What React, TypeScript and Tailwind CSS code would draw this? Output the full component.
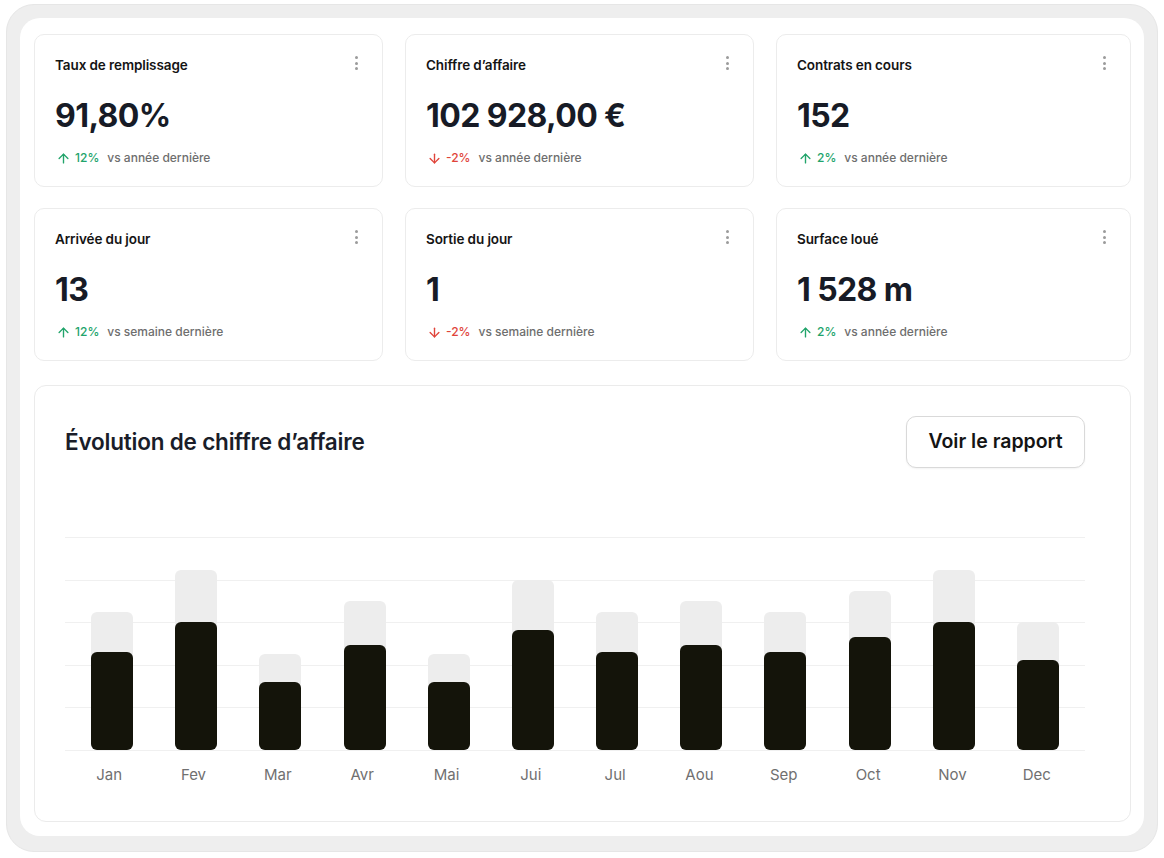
import { ArrowUp, ArrowDown } from 'lucide-react';

type Stat = {
  title: string;
  value: string;
  delta: string;
  up: boolean;
  period: string;
};

const stats: Stat[] = [
  { title: 'Taux de remplissage', value: '91,80%', delta: '12%', up: true, period: 'vs année dernière' },
  { title: 'Chiffre d’affaire', value: '102 928,00 €', delta: '-2%', up: false, period: 'vs année dernière' },
  { title: 'Contrats en cours', value: '152', delta: '2%', up: true, period: 'vs année dernière' },
  { title: 'Arrivée du jour', value: '13', delta: '12%', up: true, period: 'vs semaine dernière' },
  { title: 'Sortie du jour', value: '1', delta: '-2%', up: false, period: 'vs semaine dernière' },
  { title: 'Surface loué', value: '1 528 m', delta: '2%', up: true, period: 'vs année dernière' },
];

const months = [
  { label: 'Jan', total: 138, value: 98 },
  { label: 'Fev', total: 180, value: 128 },
  { label: 'Mar', total: 96, value: 68 },
  { label: 'Avr', total: 149, value: 105 },
  { label: 'Mai', total: 96, value: 68 },
  { label: 'Jui', total: 170, value: 120 },
  { label: 'Jul', total: 138, value: 98 },
  { label: 'Aou', total: 149, value: 105 },
  { label: 'Sep', total: 138, value: 98 },
  { label: 'Oct', total: 159, value: 113 },
  { label: 'Nov', total: 180, value: 128 },
  { label: 'Dec', total: 128, value: 90 },
];

const Kebab = () => (
  <div className="flex flex-col gap-[2.5px] pt-[1px]">
    <span className="w-[3px] h-[3px] rounded-full bg-[#9b9b9b]" />
    <span className="w-[3px] h-[3px] rounded-full bg-[#9b9b9b]" />
    <span className="w-[3px] h-[3px] rounded-full bg-[#9b9b9b]" />
  </div>
);

const StatCard: React.FC<{ stat: Stat }> = ({ stat }) => (
  <div className="h-[153px] rounded-[10px] border border-[#ececec] bg-white pl-5 pr-[24px] pt-5 flex flex-col">
    <div className="flex items-start justify-between h-5">
      <span className="text-[13.5px] leading-5 font-semibold text-[#141414] tracking-[-0.1px]">{stat.title}</span>
      <Kebab />
    </div>
    <div className="mt-[21px] text-[32px] leading-10 font-bold text-[#171b26] tracking-[-0.6px]">{stat.value}</div>
    <div className="mt-[14px] flex items-center h-4 text-[12px] font-medium">
      {stat.up ? (
        <ArrowUp size={15} strokeWidth={2.2} className="text-[#22a46b] ml-[1px]" />
      ) : (
        <ArrowDown size={15} strokeWidth={2.2} className="text-[#e0443a] ml-[1px]" />
      )}
      <span className={stat.up ? 'ml-[4px] text-[#22a46b]' : 'ml-[4px] text-[#e0443a]'}>{stat.delta}</span>
      <span className="ml-[8px] text-[#6e6e6e]">{stat.period}</span>
    </div>
  </div>
);

export default function App() {
  return (
    <div
      className="w-[1164px] h-[858px] bg-white pt-[4px] px-[6px] pb-[6px]"
      style={{ fontFamily: 'Inter, "Noto Sans", sans-serif' }}
    >
      <div className="h-full rounded-[28px] bg-[#eeeeee] border border-[#e6e6e6] pt-[13px] px-[13px] pb-[15px]">
        <div className="h-full rounded-[20px] bg-white pt-[16px] pl-[14px] pr-[13px] pb-[14px] flex flex-col gap-[24px]">
          <div className="grid grid-cols-[349px_349px_1fr] gap-x-[22px] gap-y-[21px]">
            {stats.map((s) => (
              <StatCard key={s.title} stat={s} />
            ))}
          </div>

          <div className="flex-1 rounded-[12px] border border-[#ebebeb] bg-white pt-[30px] pl-[30px] pr-[45px] flex flex-col">
            <div className="flex items-center justify-between">
              <h2 className="text-[22.5px] font-semibold text-[#1a1d29] tracking-[-0.2px]">Évolution de chiffre d’affaire</h2>
              <button className="w-[179px] h-[52px] rounded-[10px] border border-[#d9d9d9] bg-white text-[19.5px] font-semibold text-[#141414] shadow-[0_1px_2px_rgba(0,0,0,0.05)]">
                Voir le rapport
              </button>
            </div>

            <div className="mt-[69px] grid h-[214px]">
              <div className="col-start-1 row-start-1 flex flex-col justify-between">
                {[0, 1, 2, 3, 4, 5].map((i) => (
                  <div key={i} className="h-px bg-[#f0f0f0]" />
                ))}
              </div>
              <div className="col-start-1 row-start-1 flex items-end px-[5px] pb-px">
                {months.map((m) => (
                  <div key={m.label} className="flex-1 flex justify-center">
                    <div
                      className="w-[42px] rounded-[6px] bg-[#ededed] flex flex-col justify-end"
                      style={{ height: m.total }}
                    >
                      <div className="w-full rounded-[6px] bg-[#14140a]" style={{ height: m.value }} />
                    </div>
                  </div>
                ))}
              </div>
            </div>

            <div className="flex pl-[2px] pr-[6px] mt-[14px]">
              {months.map((m) => (
                <div key={m.label} className="flex-1 text-center text-[15px] leading-5 text-[#707070]">
                  {m.label}
                </div>
              ))}
            </div>
          </div>
        </div>
      </div>
    </div>
  );
}
